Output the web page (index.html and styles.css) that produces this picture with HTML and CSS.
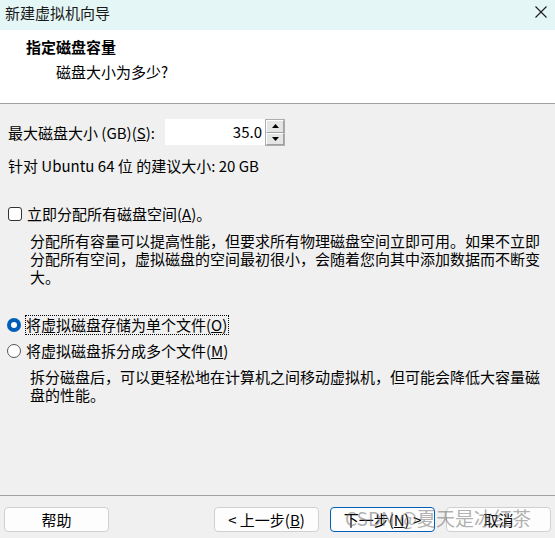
FILE: index.html
```html
<!DOCTYPE html>
<html lang="zh-CN">
<head>
<meta charset="utf-8">
<title>新建虚拟机向导</title>
<link rel="stylesheet" href="styles.css">
</head>
<body>
<div class="window">
  <div class="titlebar">
    <span class="title">新建虚拟机向导</span>
    <svg class="close" width="12" height="12" viewBox="0 0 12 12"><path d="M0.5 0.5 L11.5 11.5 M11.5 0.5 L0.5 11.5" stroke="#1a1a1a" stroke-width="1.1" fill="none"/></svg>
  </div>
  <div class="header">
    <div class="h-title">指定磁盘容量</div>
    <div class="h-sub">磁盘大小为多少?</div>
  </div>
  <div class="content">
    <div class="size-row">
      <span class="label">最大磁盘大小 (GB)(<u>S</u>):</span>
      <div class="spin">
        <div class="spin-input">35.0</div>
        <div class="spin-btns">
          <div class="spin-btn"><svg width="7" height="4" viewBox="0 0 7 4"><path d="M3.5 0 L7 4 L0 4 Z" fill="#000"/></svg></div>
          <div class="spin-btn"><svg width="7" height="4" viewBox="0 0 7 4"><path d="M0 0 L7 0 L3.5 4 Z" fill="#000"/></svg></div>
        </div>
      </div>
    </div>
    <div class="recommend">针对 Ubuntu 64 位 的建议大小: 20 GB</div>
    <div class="option opt-check">
      <span class="checkbox"></span>
      <span>立即分配所有磁盘空间(<u>A</u>)。</span>
    </div>
    <div class="desc desc-1">分配所有容量可以提高性能，但要求所有物理磁盘空间立即可用。如果不立即<br>分配所有空间，虚拟磁盘的空间最初很小，会随着您向其中添加数据而不断变<br>大。</div>
    <div class="option opt-r1">
      <span class="radio checked"></span>
      <span class="focus">将虚拟磁盘存储为单个文件(<u>O</u>)</span>
    </div>
    <div class="option opt-r2">
      <span class="radio"></span>
      <span>将虚拟磁盘拆分成多个文件(<u>M</u>)</span>
    </div>
    <div class="desc desc-2">拆分磁盘后，可以更轻松地在计算机之间移动虚拟机，但可能会降低大容量磁<br>盘的性能。</div>
  </div>
  <div class="footer">
    <button class="btn btn-help">帮助</button>
    <div class="spacer"></div>
    <button class="btn">&lt; 上一步(<u>B</u>)</button>
    <button class="btn btn-default">下一步(<u>N</u>) &gt;</button>
    <button class="btn">取消</button>
    <div class="watermark">CSDN @夏天是冰红茶</div>
  </div>
</div>
</body>
</html>
```
FILE: styles.css
```css
* { box-sizing: border-box; }
html, body { margin: 0; padding: 0; }
body {
  width: 555px;
  height: 538px;
  overflow: hidden;
  font-family: "Noto Sans CJK SC", "Noto Sans", sans-serif;
  font-size: 15px;
  color: #000;
  background: #f0f0f0;
}
.window {
  width: 555px;
  height: 538px;
  display: flex;
  flex-direction: column;
}
.titlebar {
  height: 30px;
  background: #e4f6f5;
  display: flex;
  align-items: center;
  justify-content: space-between;
  padding: 0 8px 0 5px;
  line-height: 20px;
  flex: none;
}
.title { color: #1a1a1a; margin-top: -4px; }
.close { margin-top: -6px; margin-right: 0; }
.header {
  height: 74px;
  background: #fff;
  border-bottom: 1px solid #a0a0a0;
  padding-top: 7px;
  flex: none;
  line-height: 20px;
}
.h-title { font-weight: bold; padding-left: 26px; }
.h-sub { padding-left: 56px; margin-top: 5px; }
.content {
  flex: 1;
  line-height: 18px;
}
.size-row {
  display: flex;
  align-items: center;
  margin-top: 15px;
  padding-left: 8px;
  height: 27px;
}
.label { width: 157px; }
.spin { display: flex; height: 27px; }
.spin-input {
  width: 100px;
  height: 26px;
  background: #fff;
  text-align: right;
  padding-right: 3px;
  line-height: 26px;
}
.spin-btns {
  width: 20px;
  display: flex;
  flex-direction: column;
  border: 1px solid #adadad;
  background: #f0f0f0;
}
.spin-btn {
  flex: 1;
  display: flex;
  align-items: center;
  justify-content: center;
  background: #e5e5e5;
  border: 1px solid #fff;
  border-color: #fdfdfd #a0a0a0 #a0a0a0 #fdfdfd;
}
.recommend { padding-left: 8px; margin-top: 11px; }
.option {
  display: flex;
  align-items: center;
  padding-left: 7px;
  height: 18px;
}
.opt-check { margin-top: 30px; }
.checkbox {
  width: 14px;
  height: 14px;
  border: 1px solid #333;
  border-radius: 3px;
  background: #fff;
  margin: 0 5px 0 1px;
}
.radio {
  width: 14px;
  height: 14px;
  border-radius: 50%;
  border: 1px solid #555;
  background: #fff;
  margin-right: 5px;
}
.radio.checked {
  border: 4px solid #005fb8;
  background: #fff;
}
.focus { outline: 1px dotted #000; outline-offset: 0; padding-right: 1px; }
.opt-r1 { margin-top: 30px; }
.opt-r2 { margin-top: 8px; }
.desc { padding-left: 30px; white-space: nowrap; }
.desc-1 { margin-top: 9px; }
.desc-2 { margin-top: 8px; }
.footer {
  flex: none;
  height: 43px;
  border-top: 1px solid #a0a0a0;
  padding: 11px 4px 0 4px;
  display: flex;
  align-items: flex-start;
  gap: 11px;
  position: relative;
}
.spacer { flex: 1; }
.btn {
  width: 105px;
  height: 25px;
  background: #fdfdfd;
  border: 1px solid #d0d0d0;
  border-radius: 4px;
  font-family: inherit;
  font-size: 15px;
  color: #000;
  padding: 0;
  line-height: 22px;
}
.btn-help { width: 105px; }
.btn-default { border-color: #005fb8; }
.watermark {
  position: absolute;
  left: 345px;
  top: 10px;
  font-size: 19px;
  line-height: 24px;
  color: rgba(110, 110, 110, 0.55);
  white-space: nowrap;
  pointer-events: none;
}
```
